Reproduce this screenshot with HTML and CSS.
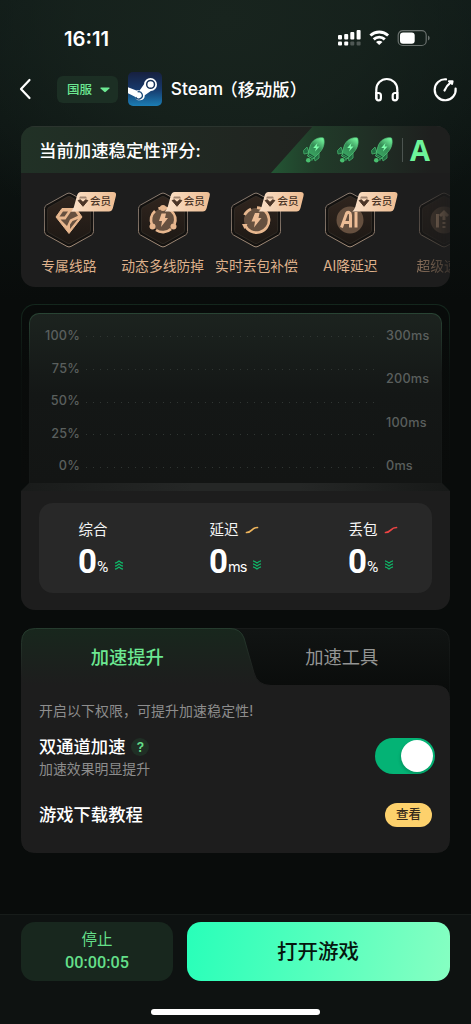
FILE: index.html
```html
<!DOCTYPE html>
<html lang="zh-CN">
<head>
<meta charset="utf-8">
<meta name="viewport" content="width=device-width, initial-scale=1">
<title>Steam（移动版）</title>
<link rel="stylesheet" href="styles.css">
</head>
<body>
<svg class="defs" width="0" height="0" aria-hidden="true">
  <defs>
    <linearGradient id="rocketFill" x1="0.8" y1="0" x2="0.2" y2="1"><stop offset="0" stop-color="#74f59d"/><stop offset=".5" stop-color="#348c55"/><stop offset="1" stop-color="#3aa863"/></linearGradient>
    <linearGradient id="hexFill" x1="0" y1="0" x2="0" y2="1"><stop offset="0" stop-color="#30251e"/><stop offset="1" stop-color="#1d1814"/></linearGradient>
    <linearGradient id="hexLine" x1="0" y1="0" x2="0" y2="1"><stop offset="0" stop-color="#8b7c70"/><stop offset=".5" stop-color="#75685e"/><stop offset="1" stop-color="#a38c78"/></linearGradient>
    <linearGradient id="steamFill" x1="0" y1="0" x2="0" y2="1"><stop offset="0" stop-color="#17203f"/><stop offset=".5" stop-color="#17386a"/><stop offset="1" stop-color="#1b7db4"/></linearGradient>
    <symbol id="rocket" viewBox="0 0 24 28">
      <path d="M5 11 1.500 14.500l.5 3.500 5-1zM17 16v6l-4 3-1-5z" fill="#236d42" stroke="#3f9f61" stroke-width="1"/>
      <path d="M21.500 2c-6-1.500-12 3-13.500 8.500L6 17l7 4 4.500-4.500C22 12 23 6 21.500 2z" fill="url(#rocketFill)" stroke="#55c57b" stroke-width=".7"/>
      <path d="m7 17-1.500 3 5.500 3 1.800-2.200" fill="#164c31" stroke="#49b86e"/>
      <path d="m6.500 18.700 5.200 2.800" stroke="#49b86e" stroke-width=".8"/>
      <circle cx="6.300" cy="24.200" r="2.300" fill="#49bf6f"/><circle cx="9.800" cy="23.600" r="1.200" fill="#2f8b52"/>
      <path d="m15.500 7-4.300 5h2.800l-1 3.500 4.500-5h-2.800z" fill="#7dffab"/>
    </symbol>
    <symbol id="hex" viewBox="0 0 52 58">
      <path d="M24 2.600Q26 1.500 28 2.600L48.500 14Q50.500 15.200 50.500 17.500V40.500Q50.500 42.800 48.500 44L28 55.400Q26 56.500 24 55.400L3.500 44Q1.500 42.800 1.500 40.500V17.500Q1.500 15.200 3.500 14z" fill="#141210" stroke="url(#hexLine)" stroke-width="1"/>
      <path d="M24.500 5.800Q26 5 27.500 5.800L46 16.200Q47.500 17 47.500 18.800V39.200Q47.500 41 46 41.800L27.500 52.200Q26 53 24.500 52.200L6 41.800Q4.500 41 4.500 39.200V18.800Q4.500 17 6 16.200z" fill="url(#hexFill)" stroke="#37302a" stroke-width=".7"/>
    </symbol>
    <symbol id="vip" viewBox="0 0 12 12">
      <path d="M3 .5h6l1 2H2z" fill="#a18672"/>
      <path d="M1.200 4.500 3.300 3.800 6 6.300l2.700-2.500 2.100.7L6 10.300z" fill="#4b3527" stroke="#4b3527" stroke-linejoin="round"/>
    </symbol>
    <symbol id="chev" viewBox="0 0 10 10">
      <path d="M1 3.200Q2.500 3 5 1q2.500 2 4 2.200M1 6.200Q2.500 6 5 4q2.500 2 4 2.200M1 9.200Q2.500 9 5 7q2.500 2 4 2.200" fill="none" stroke="#0fb768" stroke-width="1.200"/>
    </symbol>
  </defs>
</svg>
<div class="screen">
  <header class="status">
    <span class="clock">16:11</span>
    <svg class="status-icons" width="94" height="18" viewBox="0 0 94 18" fill="#fff">
      <rect x="1" y="6" width="4" height="4.500" rx="1"/><rect x="7.200" y="5" width="4" height="5.500" rx="1"/><rect x="13.300" y="3" width="4" height="7.500" rx="1"/><rect x="19.600" y="1" width="4" height="9.500" rx="1"/>
      <rect x="1" y="12.500" width="4" height="4" rx="1"/><rect x="7.200" y="12.500" width="4" height="4" rx="1"/><rect x="13.300" y="12.500" width="4" height="4" rx="1" opacity=".25"/><rect x="19.600" y="12.500" width="4" height="4" rx="1" opacity=".25"/>
      <g fill="none" stroke="#fff" stroke-width="2.900"><path d="M33.400 6.500a13 13 0 0 1 17.700 0"/><path d="M36.700 10.400a8 8 0 0 1 11.100 0"/></g><path d="M39 12.900q3.200-2.400 6.500 0L42.200 16z"/>
      <rect x="61.200" y="1.700" width="28" height="14.800" rx="4.500" fill="none" stroke="#69706d" stroke-width="1.200"/><rect x="63" y="3.500" width="14.700" height="11.200" rx="3"/><path d="M91 6.500v5q1.700-.8 1.700-2.500T91 6.500z" fill="#69706d"/>
    </svg>
  </header>
  <nav class="nav">
    <svg class="back" width="14" height="22" viewBox="0 0 14 22" fill="none" stroke="#fff" stroke-width="2.200" stroke-linecap="round" stroke-linejoin="round"><path d="M11.500 2 3 11 11.500 20"/></svg>
    <div class="region"><span>国服</span><svg width="10" height="6" viewBox="0 0 10 6"><path d="M.8.500h8.400q.8.300.2 1L5.800 4.800q-.8.700-1.600 0L.6 1.500Q0 .8.800.5z" fill="#6ce892"/></svg></div>
    <svg class="game" width="34" height="34" viewBox="0 0 34 34">
      <rect width="34" height="34" rx="5" fill="url(#steamFill)"/>
      <path d="M0 15.300v6l7 3.400a5 5 0 0 0 9.800-1.400l6-4.300a6.500 6.500 0 1 0-6.800-6.800L11.600 18.500a5 5 0 0 0-3.200 0z" fill="#fff"/>
      <circle cx="22.600" cy="12.400" r="3.900" fill="#fff" stroke="#173158" stroke-width="1.500"/>
      <path d="M9.600 19.900a3.600 3.600 0 1 1-2 5.200" fill="none" stroke="#174675" stroke-width="1.300"/>
    </svg>
    <h1 class="title"><span>Steam</span><span class="name">（移动版）</span></h1>
    <svg class="headset" width="26" height="26" viewBox="0 0 26 26" fill="none" stroke="#fff" stroke-width="2.200"><path d="M2.300 22V12.500a10.500 10.500 0 0 1 21 0V22"/><path d="M2.300 16h2.200q2.400 0 2.400 2.400v2.500q0 2.400-2.300 2.400T2.300 21zM23.300 16h-2.200q-2.400 0-2.400 2.400v2.500q0 2.400 2.300 2.400t2.300-2.300z"/></svg>
    <svg class="speed" width="26" height="26" viewBox="0 0 26 26" fill="none" stroke="#fff" stroke-width="2.200" stroke-linecap="round" stroke-linejoin="round"><path d="M14 2.300A10.500 10.500 0 1 0 23.600 11.500M12.500 13.500Q14.500 8.500 19.300 4.800M17 4.300h3.500l-.5 2.500"/></svg>
  </nav>

  <section class="score">
    <div class="score-head">
      <h2>当前加速稳定性评分:</h2>
      <div class="rating">
        <svg width="24" height="28"><use href="#rocket"/></svg>
        <svg width="24" height="28"><use href="#rocket"/></svg>
        <svg width="24" height="28"><use href="#rocket"/></svg>
        <i></i><b>A</b>
      </div>
    </div>
    <ul class="perks">
      <li class="perk">
        <div class="emblem"><svg width="52" height="58"><use href="#hex"/>
          <g transform="translate(26 29)"><path d="m-7-11.500H7L13-3 0 13.500-13-3z" fill="#e8b78e" stroke="#e8b78e" stroke-linejoin="round"/><path d="m-6-8.500h5l-3.500 5h-5zM2-8.500h4l3 4.200-8 3.800-3 6.500-6.500-6.500h5zM9-1 1 9V4.500L3.500 1z" fill="#66503f"/></g></svg>
          <span class="vip"><svg width="12" height="12"><use href="#vip"/></svg>会员</span></div>
        <p>专属线路</p>
      </li>
      <li class="perk">
        <div class="emblem"><svg width="52" height="58"><use href="#hex"/>
          <g transform="translate(26 29)"><circle r="11.500" fill="#66503f"/><path d="M-11 5A12 12 0 0 1-8-9M-4.500-11.200A12 12 0 0 1 11.500 4M8 9A12 12 0 0 1-7 10" fill="none" stroke="#e8b78e" stroke-width="2.700"/><circle cx="-10.500" cy="6.500" r="3" fill="#e8b78e"/><circle cx="10.500" cy="6.500" r="3" fill="#e8b78e"/><circle cx="0" cy="-12" r="3" fill="#e8b78e"/><path d="m-1.500-6.500h4.500L2-2H5L-2 7l1-6h-3z" fill="#edbd96"/></g></svg>
          <span class="vip"><svg width="12" height="12"><use href="#vip"/></svg>会员</span></div>
        <p>动态多线防掉</p>
      </li>
      <li class="perk">
        <div class="emblem"><svg width="52" height="58"><use href="#hex"/>
          <g transform="translate(26 29)"><circle r="12" fill="#66503f"/><path d="M-11.500-5A12.500 12.500 0 0 1-5-11M1-12.300A12.500 12.500 0 1 1-11 5" fill="none" stroke="#e8b78e" stroke-width="2.700"/><path d="m-14 4 5.500 0-3 5z" fill="#e8b78e"/><path d="m-1-7h4.500L2.500-2h3L-2 7.500l1-6h-3.500z" fill="#edbd96"/></g></svg>
          <span class="vip"><svg width="12" height="12"><use href="#vip"/></svg>会员</span></div>
        <p>实时丢包补偿</p>
      </li>
      <li class="perk">
        <div class="emblem"><svg width="52" height="58"><use href="#hex"/>
          <g transform="translate(26 29)"><circle r="13.500" fill="#66503f"/><path d="M-8.500 7.500-3.500-6.500Q-2.800-8-1-7.500.5-7 .5-5V7.500M-6 2.500H0M6-8V7.500" fill="none" stroke="#edbd96" stroke-width="3"/></g></svg>
          <span class="vip"><svg width="12" height="12"><use href="#vip"/></svg>会员</span></div>
        <p>AI降延迟</p>
      </li>
      <li class="perk faded">
        <div class="emblem"><svg width="52" height="58"><use href="#hex"/>
          <g transform="translate(26 29)"><circle r="13.500" fill="#66503f"/><path d="M-6.500-6V7.500M0 0V-7M0 2V4M0 6V8M-4-4 0-8 4-4" fill="none" stroke="#edbd96" stroke-width="3"/></g></svg>
        </div>
        <p>超级速度</p>
      </li>
    </ul>
  </section>

  <section class="monitor">
    <div class="chart-frame">
      <div class="chart">
        <div class="axis left"><span>100%</span><span>75%</span><span>50%</span><span>25%</span><span>0%</span></div>
        <div class="grid"><i></i><i></i><i></i><i></i><i></i></div>
        <div class="axis right"><span>300ms</span><span>200ms</span><span>100ms</span><span>0ms</span></div>
      </div>
    </div>
    <div class="bevel"></div>
    <div class="stats-panel">
      <div class="stats">
        <div class="stat"><div class="stat-name">综合</div><div class="stat-value"><b>0</b><span>%</span><svg width="10" height="10"><use href="#chev"/></svg></div></div>
        <div class="stat"><div class="stat-name">延迟<svg width="14" height="8" viewBox="0 0 14 8"><path d="M1.500 6.500C7.500 6.500 6 1.500 12.500 1.500" fill="none" stroke="#eeb45c" stroke-width="1.700" stroke-linecap="round"/></svg></div><div class="stat-value"><b>0</b><span class="ms">ms</span><svg class="down" width="10" height="10"><use href="#chev"/></svg></div></div>
        <div class="stat"><div class="stat-name">丢包<svg width="14" height="8" viewBox="0 0 14 8"><path d="M1.500 6.500C7.500 6.500 6 1.500 12.500 1.500" fill="none" stroke="#ed4444" stroke-width="1.700" stroke-linecap="round"/></svg></div><div class="stat-value"><b>0</b><span>%</span><svg class="down" width="10" height="10"><use href="#chev"/></svg></div></div>
      </div>
    </div>
  </section>

  <section class="boost">
    <svg class="boost-shape" width="429" height="225" viewBox="0 0 429 225">
      <defs><linearGradient id="tabOn" x1="0" y1="0" x2="0" y2="57" gradientUnits="userSpaceOnUse"><stop offset="0" stop-color="#18271d"/><stop offset="1" stop-color="#1d1d1d"/></linearGradient>
      <linearGradient id="tabOff" x1="0" y1="0" x2="0" y2="1"><stop offset="0" stop-color="#111413"/><stop offset="1" stop-color="#090b0a"/></linearGradient>
      <linearGradient id="tabLine" x1="0" y1="0" x2="0" y2="50" gradientUnits="userSpaceOnUse"><stop offset="0" stop-color="#263c2e"/><stop offset="1" stop-color="#1d1d1d"/></linearGradient>
      <linearGradient id="offLine" x1="0" y1="0" x2="0" y2="1"><stop offset="0" stop-color="#181b1a"/><stop offset="1" stop-color="#0c0f0e"/></linearGradient></defs>
      <path d="M200 .5H414.500q14 0 14 14V70H200z" fill="url(#tabOff)" stroke="url(#offLine)"/>
      <path d="M.5 14.500Q.5.500 14.500.500H209q10.500 0 14 9.500L233 45q3.500 12.500 17 12.500H414.500q14 0 14 14V210.500q0 14-14 14H14.500q-14 0-14-14z" fill="url(#tabOn)" stroke="url(#tabLine)"/>
    </svg>
    <div class="boost-content">
      <div class="tabs"><span class="tab active">加速提升</span><span class="tab">加速工具</span></div>
      <p class="hint">开启以下权限，可提升加速稳定性!</p>
      <div class="row">
        <div><h3>双通道加速<span class="help">?</span></h3><p class="sub">加速效果明显提升</p></div>
        <span class="switch"><i></i></span>
      </div>
      <div class="row tutorial"><h3>游戏下载教程</h3><span class="view">查看</span></div>
    </div>
  </section>

  <footer class="actions">
    <div class="buttons">
      <div class="stop"><span>停止</span><time>00:00:05</time></div>
      <div class="open">打开游戏</div>
    </div>
    <div class="home"></div>
  </footer>
</div>
</body>
</html>
```
FILE: styles.css
```css
* { box-sizing: border-box; margin: 0; padding: 0; }
body { background: #090c0b; color: #fff; font-family: Inter, "Noto Sans CJK SC", sans-serif; }
svg { display: block; flex: none; }
.defs { position: absolute; }
i, b, em { font-style: normal; }
.screen {
  width: 471px; height: 1024px; overflow: hidden;
  display: flex; flex-direction: column;
  background: radial-gradient(ellipse 330px 230px at 225px 20px, #18241e 0%, rgba(24,36,30,.75) 45%, rgba(24,36,30,0) 100%), linear-gradient(#0f1917 0, #0d1513 120px, #090c0b 300px);
}

.status { height: 62px; padding: 24px 40px 0 64px; display: flex; justify-content: space-between; }
.clock { font-size: 20.300px; line-height: 29px; font-weight: 600; letter-spacing: 0; }
.status-icons { margin-top: 5px; }

.nav { height: 64px; padding: 10px 13px 0 18px; display: flex; }
.back { margin: 6px 25px 0 0; }
.region { width: 61px; height: 27px; margin-top: 4px; border-radius: 6px; background: #1c2f24; color: #6ce892; display: flex; align-items: center; gap: 8px; padding-left: 10px; font-size: 12.500px; font-weight: 500; line-height: 26px; }
.game { margin-left: 10px; }
.title { margin-left: 9px; font-size: 17.300px; line-height: 34px; font-weight: 500; white-space: nowrap; width: 194px; display: flex; }
.name { font-family: "Noto Sans CJK SC", sans-serif; font-feature-settings: "halt"; margin-left: 6px; }
.headset { margin: 5px 0 0 10px; }
.speed { margin: 5px 0 0 32px; }

.score { width: 429px; height: 161px; margin: 0 21px; border-radius: 14px; overflow: hidden; background: #1d1d1d; }
.score-head { height: 47px; display: flex; background: linear-gradient(90deg, #213126, #202420 60%, #1d1d1d); box-shadow: inset 0 1px #2b342e; }
.score-head h2 { width: 250px; padding-left: 18px; font-size: 17.400px; line-height: 49px; font-weight: 500; white-space: nowrap; }
.rating { width: 179px; height: 47px; padding: 10px 0 0 31px; display: flex; background: linear-gradient(90deg, #235634 0, #213b29 25%, #202f25 55%, #1e1f1e 90%); clip-path: polygon(42px 0, 100% 0, 100% 100%, 0 100%); }
.rating svg { margin-right: 10px; }
.rating i { width: 1px; height: 24px; margin: 2px 7px 0 -2px; background: #4c5450; }
.rating b { font: 700 29px/28px "Open Sans", sans-serif; color: #6df39a; }
.perks { list-style: none; display: flex; padding: 18px 0 0 1px; }
.perk { width: 93.800px; flex: none; text-align: center; }
.emblem { position: relative; width: 52px; margin: 0 auto; }
.perk p { margin-top: 6px; font-size: 13.800px; line-height: 22px; color: #dfb18b; white-space: nowrap; }
.vip { position: absolute; left: 28px; top: 0; width: 46px; height: 21px; display: flex; align-items: center; gap: 1px; padding-left: 6px; background: linear-gradient(90deg, #fae0c8, #eebc91); clip-path: path("M10 1H42Q46 1 45 5L42 17Q41 20.500 38 20.500H0Q2 19 3 16L6 5Q7 1 10 1Z"); color: #4b3527; font-size: 10.500px; font-weight: 500; line-height: 20px; white-space: nowrap; }
.faded { -webkit-mask-image: linear-gradient(90deg, rgba(0,0,0,.65) 15px, transparent 64px); mask-image: linear-gradient(90deg, rgba(0,0,0,.65) 15px, transparent 64px); }

.monitor { width: 429px; margin: 17px 21px 0; }
.chart-frame { height: 179px; border-radius: 14px 14px 0 0; background: linear-gradient(#080b0a, #0a0c0b) padding-box, linear-gradient(#14271d, #0b100e 70px, #0a0c0b 170px) border-box; border: 1px solid transparent; border-bottom: 0; padding: 8px 7px 0; }
.chart { height: 170px; border-radius: 10px 10px 0 0; display: flex; background: linear-gradient(#1c231f, #141716 80px, #131514) padding-box, linear-gradient(#294434, #151817 60px) border-box; border: 1px solid transparent; border-bottom: 0; padding: 14px 10px 9px 0; }
.axis { display: flex; flex: none; flex-direction: column; justify-content: space-between; font-size: 12.700px; line-height: 16px; color: #5a5f5d; letter-spacing: .2px; font-weight: 500; }
.axis.left { width: 50px; text-align: right; }
.axis.right { width: 44px; margin-left: 7px; }
.grid { width: 293px; flex: none; margin: 8px 0 6px 6px; display: flex; flex-direction: column; justify-content: space-between; }
.grid i { height: 1px; background: repeating-linear-gradient(90deg, #303633 0, #303633 1px, transparent 1px, transparent 7px); }
.bevel { height: 8px; background: linear-gradient(90deg, #191b1a, #252726 40%, #252726 65%, #171918); clip-path: polygon(8px 0, 421px 0, 100% 100%, 0 100%); }
.stats-panel { height: 119px; padding: 12px 18px 17px; background: #1d1d1d; border-radius: 0 0 14px 14px; }
.stats { height: 90px; border-radius: 14px; background: #282828; padding: 16px 0 0 40px; display: grid; grid-template-columns: 131px 139px 1fr; }
.stat-name { display: flex; align-items: center; gap: 6px; font-size: 14.500px; line-height: 22px; color: #f5f5f5; margin-left: -.5px; }
.stat-value { display: flex; align-items: baseline; font-size: 14.500px; line-height: 34px; margin-top: 1px; }
.stat-value b { font: 700 33px/40px Roboto, sans-serif; width: 18px; text-indent: -1px; }
.stat-value span { font-family: Roboto, Inter, sans-serif; font-size: 15.500px; width: 12px; transform: translateY(-1.500px); }
.stat-value .ms { width: 19px; font-family: Inter, sans-serif; font-size: 14.500px; letter-spacing: -1px; }
.stat-value svg { margin-left: 5px; transform: translateY(-3px); }
.stat-value svg.down { transform: translateY(-3px) scaleY(-1); }

.boost { width: 429px; height: 225px; margin: 18px 21px 0; display: grid; }
.boost-shape, .boost-content { grid-area: 1 / 1; }
.boost-content { padding: 0 18px; z-index: 1; }
.tabs { height: 57px; margin: 0 -17px 0 -19px; display: flex; font-size: 18.300px; line-height: 58px; text-align: center; color: #949594; }
.tab { width: 214.500px; }
.tab.active { color: #6ce892; font-weight: 500; }
.hint { margin-top: 15px; font-size: 13.900px; line-height: 22px; color: #8d8d8d; white-space: nowrap; letter-spacing: .12px; }
.row { display: flex; justify-content: space-between; align-items: center; }
.row h3 { font-size: 17.300px; line-height: 24px; font-weight: 500; display: flex; align-items: center; }
.hint + .row { margin: 13px -3px 0 0; }
.sub { font-size: 13.900px; line-height: 20px; color: #8d8d8d; }
.help { width: 18px; height: 18px; margin-left: 6px; border-radius: 50%; background: #202f25; color: #64df89; text-align: center; font-size: 13.500px; line-height: 18px; font-weight: 600; }
.switch { width: 60px; height: 36px; margin-bottom: 2px; border-radius: 18px; background: #04b375; padding: 2px; display: flex; justify-content: flex-end; align-items: center; }
.switch i { width: 32px; height: 32px; border-radius: 50%; background: #fff; box-shadow: -1px 2px 3px rgba(0,0,0,.15); }
.tutorial { margin-top: 24px; }
.view { width: 47px; height: 24px; border-radius: 12px; background: #fdd16c; color: #33291a; font-size: 12.500px; line-height: 24px; text-align: center; font-weight: 500; }

.actions { margin-top: 61px; height: 110px; border-top: 1px solid #171c1a; background: #0e1211; padding: 7px 21px 0; }
.buttons { display: grid; grid-template-columns: 152px 263px; gap: 14px; }
.stop, .open { height: 59px; border-radius: 14px; display: flex; flex-direction: column; align-items: center; justify-content: center; }
.stop { background: #18271e; color: #64df89; font-size: 15.500px; line-height: 22px; }
.stop time { font-family: Roboto, sans-serif; font-size: 16.300px; font-weight: 500; line-height: 23px; }
.open { background: linear-gradient(100deg, #28ffb9, #54ffbd 48%, #86ffc2); color: #06150e; font-size: 20.500px; line-height: 30px; font-weight: 500; padding-right: 1px; }
.home { width: 169px; height: 6px; border-radius: 3px; background: #fff; margin: 28px auto 0; }
```
